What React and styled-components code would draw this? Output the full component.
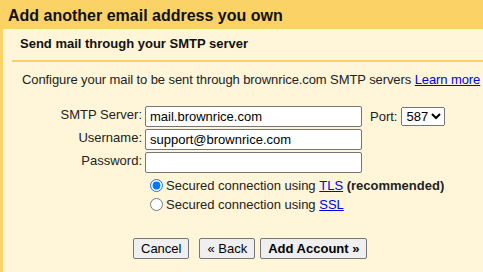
import React from "react"
import styled, { createGlobalStyle } from "styled-components"

const GlobalStyle = createGlobalStyle`
  html, body {
    margin: 0;
    padding: 0;
  }
  body {
    font-family: "Liberation Sans", Arial, sans-serif;
    background: #fad266;
    color: #222;
  }
`

const Page = styled.div`
  min-height: 100vh;
  display: flex;
  flex-direction: column;
  background: #fad266;
`

const TitleBar = styled.div`
  height: 29px;
  box-sizing: border-box;
  padding: 2px 0 0 8px;
  font-size: 16px;
  font-weight: bold;
  line-height: 27px;
  color: #111;
  white-space: nowrap;
`

const Panel = styled.div`
  flex: 1;
  margin-left: 3px;
  background: #fff5d8;
  overflow: hidden;
`

const SubHeader = styled.div`
  margin-left: 9px;
  padding: 7px 0 8px 8px;
  font-size: 13px;
  font-weight: bold;
  line-height: 16px;
  color: #111;
  border-bottom: 2px solid #fad266;
`

const Body = styled.div`
  padding: 10px 0 0 19px;
  font-size: 13px;
  line-height: 16px;
`

const Intro = styled.div`
  white-space: nowrap;
  letter-spacing: -0.09px;
`

const Link = styled.a`
  color: #0000ee;
  text-decoration: underline;
  cursor: pointer;
`

const FormGrid = styled.div`
  display: grid;
  grid-template-columns: 120px 217px auto;
  column-gap: 3px;
  row-gap: 2px;
  margin-top: 18px;
  align-items: center;
`

const Label = styled.label`
  text-align: right;
  font-size: 13px;
  line-height: 16px;
  position: relative;
  top: -2px;
`

const TextInput = styled.input`
  box-sizing: border-box;
  width: 217px;
  height: 21px;
  margin: 0;
  padding: 1px 4px;
  border: 1px solid #767676;
  border-radius: 2px;
  background: #fff;
  font-family: "Liberation Sans", Arial, sans-serif;
  font-size: 13px;
  color: #000;
`

const PortCell = styled.div`
  display: flex;
  align-items: center;
  gap: 4px;
  padding-left: 5px;
  font-size: 13px;
`

const PortSelect = styled.select`
  height: 19px;
  font-family: "Liberation Sans", Arial, sans-serif;
  font-size: 13px;
  color: #000;
  margin: 0;
`

const RadioGroup = styled.div`
  grid-column: 2 / 4;
  display: flex;
  flex-direction: column;
  margin-top: 1px;
`

const RadioRow = styled.label`
  display: flex;
  align-items: center;
  height: 19px;
  white-space: nowrap;
  font-size: 13px;

  input {
    margin: 0 3px 0 5px;
    width: 13px;
    height: 13px;
  }
`

const ButtonRow = styled.div`
  display: flex;
  padding-left: 111px;
  margin-top: 24px;
`

const Button = styled.button`
  height: 21px;
  box-sizing: border-box;
  padding: 0 7px;
  margin: 0 ${props => props.gap || 0}px 0 0;
  border: 1px solid #767676;
  border-radius: 2px;
  background: #efefef;
  font-family: "Liberation Sans", Arial, sans-serif;
  font-size: 13px;
  font-weight: ${props => (props.primary ? "bold" : "normal")};
  color: #000;
  white-space: nowrap;
`

export default function App() {
  return (
    <Page>
      <GlobalStyle />
      <TitleBar>Add another email address you own</TitleBar>
      <Panel>
        <SubHeader>Send mail through your SMTP server</SubHeader>
        <Body>
          <Intro>
            Configure your mail to be sent through brownrice.com SMTP servers{" "}
            <Link>Learn more</Link>
          </Intro>
          <FormGrid>
            <Label>SMTP Server:</Label>
            <TextInput type="text" defaultValue="mail.brownrice.com" />
            <PortCell>
              Port:
              <PortSelect defaultValue="587">
                <option value="25">25</option>
                <option value="465">465</option>
                <option value="587">587</option>
              </PortSelect>
            </PortCell>
            <Label>Username:</Label>
            <TextInput type="text" defaultValue="support@brownrice.com" />
            <span />
            <Label>Password:</Label>
            <TextInput type="password" />
            <span />
            <span />
            <RadioGroup>
              <RadioRow>
                <input type="radio" name="sec" defaultChecked />
                Secured connection using&nbsp;<Link>TLS</Link>&nbsp;
                <b>(recommended)</b>
              </RadioRow>
              <RadioRow>
                <input type="radio" name="sec" />
                Secured connection using&nbsp;<Link>SSL</Link>
              </RadioRow>
            </RadioGroup>
          </FormGrid>
          <ButtonRow>
            <Button gap={10}>Cancel</Button>
            <Button gap={5}>« Back</Button>
            <Button primary>Add Account »</Button>
          </ButtonRow>
        </Body>
      </Panel>
    </Page>
  )
}
